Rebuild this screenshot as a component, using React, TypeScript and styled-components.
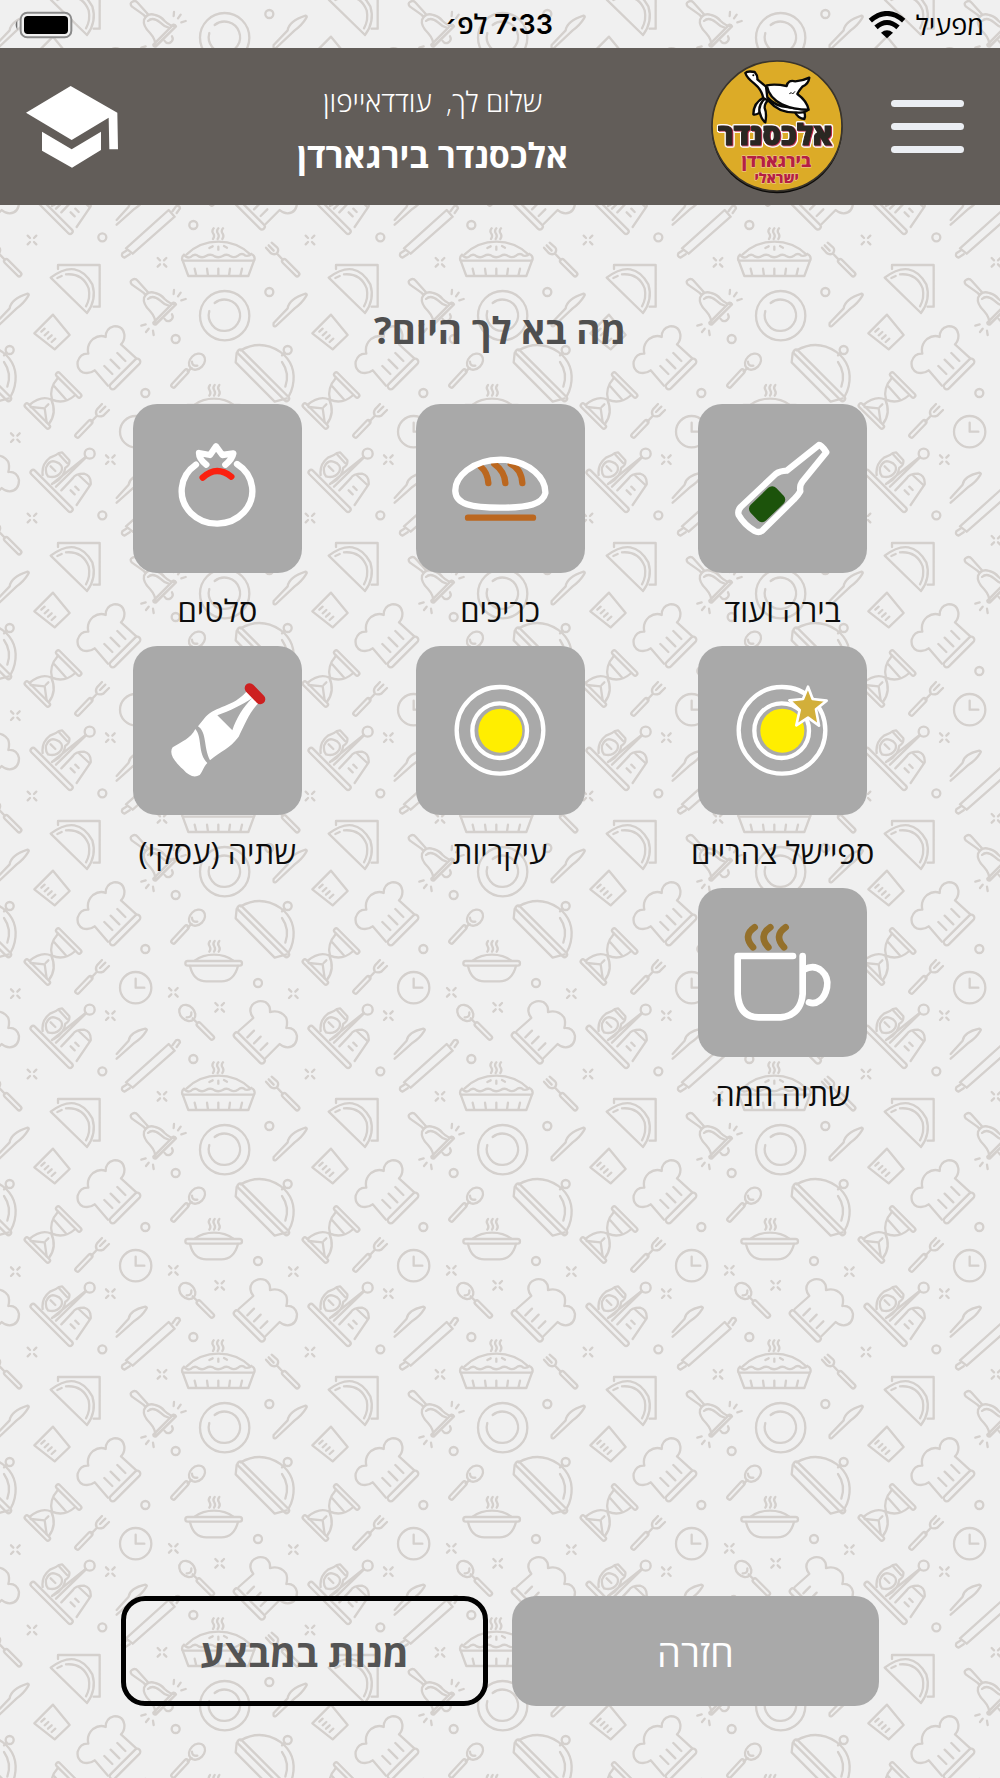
import React from "react";
import styled, { createGlobalStyle } from "styled-components";

/* ---------- kitchen wallpaper: one seamless tile ---------- */

const steam = (x: number, y: number) =>
  [0, 14, 28].map((d) => `<path d="M${x + d} ${y}q-7 8-1 16q5 8-1 16"/>`).join("");
const dot = (x: number, y: number) => `<circle cx="${x}" cy="${y}" r="12"/>`;
const spark = (x: number, y: number) =>
  `<path d="M${x - 13} ${y - 13}l7 7M${x + 13} ${y - 13}l-7 7M${x - 13} ${y + 13}l7-7M${x + 13} ${y + 13}l-7-7"/>`;
const bar = (x: number, y: number, len: number, w: number, angle: number) =>
  `<rect x="${x}" y="${y - w / 2}" width="${len}" height="${w}" rx="${w / 2}" transform="rotate(${angle} ${x} ${y})"/>`;

const wallpaperArt = [
  // pie
  steam(281, 4),
  `<path d="M200 82q40-38 95-38t96 38M192 83q-6 5-6 12q0 6 8 6h202q8 0 8-6q0-10-10-14M192 83q8 12 20 7q12-12 24-2q12 6 22-1q14-8 26 1q12 6 24-1q12-8 24 1q10 6 22-2q12-10 22 0q12 2 18-5"/>`,
  `<path d="M188 101l17 46h180l17-46M224 125l5 21M261 125l3 21M295 125v21M330 125l-3 21M366 125l-5 21M268 63l10-5M295 59v9M312 57l9 5"/>`,
  // small fork
  bar(488, 98, 68, 13, 45),
  `<path d="M488 98l-16-17M438 62l14 16q8 6 18 2q8-10 2-18l-17-15M446 55l15 16"/>`,
  // bell
  `<path d="M70 197L35 172q-7-9 2-14q9-5 16 3l31 35M70 197l6 6M72 212q10-22 34-14q16 4 28 18q16 16 34 16L106 292q2-20-16-40q-22-22-18-40M84 216q14-14 36 4q12 12 26 16M100 287l60-60q6-1 8 5l-60 60q-8 2-8-5M134 276q6 10 18 4q10-8 4-18M162 189l-1 12M182 197l-8 11M197 216l-13 4M64 296l13-4M86 305l-8 10M99 311l2 13"/>`,
  // plate
  `<circle cx="314" cy="266" r="74"/><path d="M284 228a47 47 0 1 1-16 24"/>`,
  // table knife
  `<path d="M461 288l42-44q4-28 54-44q6 2 1 8q-12 20-34 36l-56 53q-10 5-7-9"/>`,
  // taco on napkin
  `<path d="M648 126v-12h125v125h-18M626 152q80-60 125 20q14 46-16 86L626 152M646 153l13-6M672 142q50-4 68 42q6 30-8 54"/>`,
  // napkin
  `<path d="M633 263l50 61-45 43-61-48zM598 314l10-9M608 325l11-10M618 335l11-10M629 345l11-10"/>`,
  // chef hat
  `<path d="M798 476l-40-46q-16 12-36 6q-18-10-15-32q8-26 32-24q-6-26 14-44q20-14 38-6q0-26 24-32q28-2 32 24q2 18-10 30l46 42M787 417l24 24M806 398l26 26M826 378l24 24"/>`,
  bar(806, 484, 122, 18, -45),
  // hot dish
  steam(270, 474),
  bar(196, 541, 170, 14, 0),
  `<path d="M224 533q24-18 58-18t58 18M210 549q10 46 50 46h44q38 0 50-46"/>`,
  // spoon
  bar(156, 480, 70, 13, -47),
  `<path d="M203 433l12-10"/><ellipse cx="231" cy="404" rx="27" ry="21" transform="rotate(-45 231 404)"/><path d="M216 404q0 14 16 12"/>`,
  // cloche
  `<path d="M362 370q60-34 118 4q52 38 38 104q-4 18-12 30M486 405q24 34 10 74"/>`,
  bar(355, 370, 212, 15, 45),
  `<path d="M350 378l-3 28 117 118 36-10M486 385l8-8"/><circle cx="503" cy="369" r="12"/>`,
  // hourglass
  bar(644, 438, 102, 13, 45),
  bar(550, 531, 102, 13, 45),
  `<path d="M648 452q-28 32-18 66q36 16 70-14M636 477l38 43M562 534q36-30 66-16q18 40-8 74M566 540l42 4 6 42M611 540l8-8"/>`,
  // fork
  bar(702, 630, 68, 13, -46),
  `<path d="M748 584l16-17M780 531l-15 16q-6 8-1 18q8 6 20 1l17-17M790 539l-16 16"/>`,
  // clock
  `<circle cx="47" cy="614" r="47"/><path d="M47 587v27h26"/>`,
  // salad spoon
  bar(232, 720, 68, 13, 45),
  `<path d="M232 720l-14-14"/><ellipse cx="202" cy="690" rx="27" ry="21" transform="rotate(45 202 690)"/><path d="M214 688q2 16-14 15"/>`,
  // second chef hat
  `<path d="M356 744l44-39q-16-22-4-38q16-18 40-10q16 10 14 30q30-8 48 16q6 14 1 32q26-2 32 24q0 32-28 34q-14 0-24-10l-42 42M382 763l20-20M402 781l20-20M422 801l20-20"/>`,
  bar(344, 751, 124, 17, 45),
  // cruet stand
  bar(568, 731, 172, 15, 45),
  `<path d="M602 744q-4-32 22-52l18-8q8-8 18-8l22 24q2 14-12 22q-4 30-34 46M651 682l24 26M612 722q10-24 28-18q26 8 18 30q-14 22-40 14q-8-8-6-26M626 718l14 14M630 771l102-82M642 779l90-88M658 790l34-36q8-14 34-14q22 6 20 32l-42 62M710 744l32 30M700 779l10 10M686 790l12 12"/><circle cx="743" cy="680" r="15"/>`,
  // long knife on the left
  `<path d="M-10 813l36-40q4-26 50-36q8 2 2 8q-12 20-34 34l-54 48"/>`,
  // rolling pin
  `<path d="M18 898L146 783l18 20L38 914zM158 786l10-14q10-4 12 6l-10 14M22 903l-15 10q-4 10 6 13l16-10"/>`,
  dot(448, 195), dot(167, 336), dot(76, 498), dot(414, 600), dot(781, 31), dot(220, 828),
  spark(570, 39), spark(126, 106), spark(160, 628), spark(299, 673), spark(520, 632), spark(805, 698),
].join("");

const wallpaperSvg =
  `<svg xmlns="http://www.w3.org/2000/svg" viewBox="0 0 834 834"><defs><g id="a" fill="none" stroke="#d4d0cd" stroke-width="7" stroke-linecap="round" stroke-linejoin="round">${wallpaperArt}</g></defs>` +
  `<use href="#a"/><use href="#a" x="834"/><use href="#a" x="-834"/><use href="#a" y="834"/><use href="#a" y="-834"/></svg>`;

const wallpaper = `url("data:image/svg+xml,${encodeURIComponent(wallpaperSvg)}")`;

/* ---------- styles ---------- */

const font = `"Open Sans", "Noto Sans", "DejaVu Sans", sans-serif`;

const GlobalStyle = createGlobalStyle`
  *, *::before, *::after { box-sizing: border-box; }
  body { margin: 0; }
  button { font: inherit; color: inherit; border: 0; padding: 0; background: none; cursor: pointer; }
`;

const Page = styled.div`
  display: flex;
  flex-direction: column;
  min-height: 100vh;
  font-family: ${font};
  color: #0c0c0c;
  background: #f0f0f0 ${wallpaper} 120px -51px / 278px 278px;
`;

const StatusBar = styled.div`
  display: grid;
  grid-template-columns: 1fr auto 1fr;
  align-items: center;
  height: 48px;
  padding: 2px 16px 0 14px;
  font-size: 27px;
  line-height: 36px;
  color: #000;
`;

const Carrier = styled.div`
  display: flex;
  align-items: center;
  gap: 10px;
`;

const Clock = styled.time`
  font-family: Inter, ${font};
  font-weight: 600;
`;

const BatterySlot = styled.div`
  display: flex;
  justify-content: flex-end;
`;

const Header = styled.header`
  display: flex;
  align-items: center;
  height: 157px;
  padding: 0 36px 0 26px;
  background: #625d59;
  color: #fff;
`;

const MenuButton = styled.button`
  display: flex;
  flex-direction: column;
  gap: 16px;
  width: 73px;
`;

const MenuLine = styled.span`
  height: 7px;
  border-radius: 4px;
  background: #ebeef3;
`;

const LogoLink = styled.a`
  display: flex;
  margin-right: 47px;
`;

const Greeting = styled.div`
  flex: 1;
  padding-top: 12px;
  text-align: center;
`;

const Hello = styled.p`
  margin: 0;
  font-size: 28px;
  line-height: 44px;
  font-weight: 300;
  white-space: pre;
`;

const Venue = styled.h1`
  margin: 0;
  font-size: 34px;
  line-height: 64px;
  font-weight: 700;
`;

const LessonsButton = styled.button`
  display: flex;
  margin-right: 37px;
`;

const Main = styled.main`
  display: flex;
  flex-direction: column;
  flex: 1;
  padding: 92px 76px 72px;
`;

const Question = styled.h2`
  margin: 0 0 41px;
  font-size: 37px;
  line-height: 66px;
  font-weight: 700;
  text-align: center;
  color: #4f4f4f;
`;

const Categories = styled.div`
  display: grid;
  grid-template-columns: repeat(3, 1fr);
  row-gap: 14px;
  justify-items: center;
`;

const Category = styled.button`
  display: flex;
  flex-direction: column;
  align-items: center;
  gap: 16px;
`;

const Tile = styled.span`
  display: flex;
  width: 169px;
  height: 169px;
  border-radius: 24px;
  background: #a9a9a9;
`;

const Label = styled.span`
  font-size: 31px;
  line-height: 43px;
  white-space: nowrap;
`;

const Actions = styled.div`
  display: grid;
  grid-template-columns: 1fr 1fr;
  gap: 24px;
  margin: auto 45px 0;
`;

const ActionButton = styled.button<{ $outlined?: boolean }>`
  height: 110px;
  padding-top: 2px;
  border-radius: 24px;
  font-size: 38px;
  font-weight: ${(p) => (p.$outlined ? 700 : 400)};
  color: ${(p) => (p.$outlined ? "#545454" : "#fff")};
  background: ${(p) => (p.$outlined ? "transparent" : "#a9a9a9")};
  border: ${(p) => (p.$outlined ? "5px solid #000" : "0")};
`;

/* ---------- drawings ---------- */

const Wifi = () => (
  <svg width="38" height="28" viewBox="0 0 114 84" aria-hidden="true">
    <g fill="none" stroke="#000" strokeWidth="15">
      <path d="M7 29Q57-14 107 29" />
      <path d="M24 49Q57 20 90 49" />
    </g>
    <path d="M39 65Q57 51 75 65L57 82Z" />
  </svg>
);

const Battery = () => (
  <svg width="59" height="28" viewBox="0 0 177 84" aria-hidden="true">
    <rect x="20" y="5" width="152" height="74" rx="20" fill="#f0f0f0" stroke="#8a8a8a" strokeWidth="6" />
    <rect x="30" y="15" width="132" height="54" rx="11" />
    <path d="M10 28Q0 42 10 57Z" fill="#6e6e6e" />
  </svg>
);

const Cap = () => (
  <svg width="92" height="82" viewBox="0 0 276 246" fill="#fff" aria-hidden="true">
    <path d="M0 80L134 0 274 80 276 190H250L248 95 137 162Z" />
    <path d="M48 137L137 190 225 137V192L138 245 48 194Z" />
  </svg>
);

const BrandName = styled.text`
  filter: drop-shadow(3px 2px 0 #b92043) drop-shadow(3px 0 0 #fff) drop-shadow(-3px 0 0 #fff)
    drop-shadow(0 3px 0 #fff) drop-shadow(0 -3px 0 #fff);
`;

const Logo = () => (
  <svg width="134" height="134" viewBox="60 30 402 402" aria-hidden="true">
    <ellipse cx="261" cy="234" rx="196" ry="196" fill="#0c0b0a" />
    <circle cx="261" cy="228" r="195" fill="#dcab27" stroke="#3a352c" strokeWidth="5" />
    <g fill="#fff" stroke="#090909" strokeWidth="7" strokeLinejoin="round">
      <path d="M222 142Q190 158 190 193Q194 196 208 189Q210 170 228 153Z" />
      <path d="M225 145Q202 168 210 190Q214 208 226 217Q231 190 224 174Q223 160 237 148Z" />
      <path d="M314 185Q324 205 343 207Q349 193 338 181Z" />
      <path d="M166 69Q172 62 194 66Q204 78 202 88L228 110L232 142Q258 170 292 171L354 180Q342 191 318 187Q268 190 237 154L220 144Q215 119 193 101Q170 83 166 69Z" />
      <path d="M230 106Q255 101 290 108Q294 88 316 94Q338 93 358 83Q356 102 337 110Q325 124 322 132Q350 152 356 179Q310 179 276 163Q237 144 230 106Z" />
      <path d="M298 131l6-3 4 4 7-8" fill="none" strokeWidth="3" />
    </g>
    <circle cx="190" cy="76" r="3" />
    <g direction="rtl" textAnchor="middle" fontFamily={font} fontWeight="800">
      <BrandName x="255" y="286" fontSize="87" fill="#2a2722" stroke="#2a2722" strokeWidth="3">אלכסנדר</BrandName>
      <text x="259" y="350" fontSize="52" fill="#b51f43" stroke="#f1cfa0" strokeWidth="3" paintOrder="stroke">בירגארדן</text>
      <text x="260" y="398" fontSize="42" fill="#b51f43" stroke="#f1cfa0" strokeWidth="3" paintOrder="stroke">ישראלי</text>
    </g>
  </svg>
);

const Plate = () => (
  <>
    <g fill="none" stroke="#fff" strokeWidth="13">
      <circle cx="252" cy="253" r="130" />
      <circle cx="251" cy="254" r="82" />
    </g>
    <circle cx="253" cy="254" r="66" fill="#ffee00" />
  </>
);

const art: Record<string, React.ReactNode> = {
  beer: (
    <>
      <path
        d="M363 123Q370 122 385 145L314 232Q304 244 307 262Q300 275 288 286L194 379Q183 388 170 381Q138 362 122 333Q118 320 128 309L233 210Q245 201 266 200Z"
        fill="none" stroke="#fff" strokeWidth="19" strokeLinejoin="round"
      />
      <rect x="154" y="268" width="107" height="66" rx="17" transform="rotate(-44 207 301)" fill="#1c530b" />
    </>
  ),
  bread: (
    <>
      <g fill="none" stroke="#bb671f" strokeWidth="19" strokeLinecap="round">
        <path d="M193 187Q215 205 217 237M235 180Q266 202 268 237M284 180Q316 195 319 237" />
        <path d="M156 341H351" />
      </g>
      <path d="M254 167C346 170 390 226 388 268C380 300 340 311 252 311C164 311 120 300 118 262C116 220 166 168 254 167Z" fill="none" stroke="#fff" strokeWidth="19" />
    </>
  ),
  tomato: (
    <g fill="none" strokeWidth="19" strokeLinecap="round" strokeLinejoin="round">
      <g stroke="#fff">
        <path d="M189 182A106 98 0 1 0 312 180" />
        <path d="M220 182Q198 165 198 147L231 153 249 127 268 153 301 148Q298 165 277 182" />
      </g>
      <path d="M209 221Q250 183 295 218" stroke="#fb2110" />
    </g>
  ),
  special: (
    <>
      <Plate />
      <path d="M330 122L344 159 386 164 354 190 363 239 330 215 295 238 305 192 274 163 315 159Z" fill="#d2af3a" stroke="#fff" strokeWidth="8" strokeLinejoin="round" />
    </>
  ),
  plate: <Plate />,
  cola: (
    <>
      <path fill="#fff" fillRule="evenodd" d="M340 137C300 183 248 180 218 212L195 241C222 258 211 304 231 343C265 314 290 308 317 272C336 235 350 195 380 168ZM253 208C290 194 328 177 358 156C330 184 310 216 298 253Z" />
      <path fill="#fff" d="M187 249C173 277 148 286 119 304C108 320 119 342 150 370C168 391 185 396 200 387C210 375 211 363 223 351C193 321 209 275 187 249Z" />
      <rect x="328" y="128" width="76" height="30" rx="15" transform="rotate(46 366 143)" fill="#cd2020" />
    </>
  ),
  coffee: (
    <g fill="none" strokeWidth="20" strokeLinecap="round" strokeLinejoin="round">
      <path stroke="#fff" d="M285 204H119V318Q124 388 182 388H248Q308 382 314 318V204" />
      <path stroke="#fff" d="M318 245C360 222 394 260 387 298C380 334 356 351 333 343" />
      <path stroke="#94702b" d="M170 118Q133 143 165 178M217 118Q180 143 211 178M263 118Q226 143 258 178" />
    </g>
  ),
};

const categories = [
  { art: "beer", label: "בירה ועוד" },
  { art: "bread", label: "כריכים" },
  { art: "tomato", label: "סלטים" },
  { art: "special", label: "ספיישל צהריים" },
  { art: "plate", label: "עיקריות" },
  { art: "cola", label: "שתיה (עסקי)" },
  { art: "coffee", label: "שתיה חמה" },
];

export default function App() {
  return (
    <Page dir="rtl" lang="he">
      <GlobalStyle />
      <StatusBar>
        <Carrier>
          <span>מפעיל</span>
          <Wifi />
        </Carrier>
        <Clock>7:33 לפ׳</Clock>
        <BatterySlot>
          <Battery />
        </BatterySlot>
      </StatusBar>
      <Header>
        <MenuButton type="button" aria-label="תפריט">
          <MenuLine />
          <MenuLine />
          <MenuLine />
        </MenuButton>
        <LogoLink href="#" aria-label="אלכסנדר בירגארדן">
          <Logo />
        </LogoLink>
        <Greeting>
          <Hello>שלום לך,  עודדאייפון</Hello>
          <Venue>אלכסנדר בירגארדן</Venue>
        </Greeting>
        <LessonsButton type="button" aria-label="הדרכה">
          <Cap />
        </LessonsButton>
      </Header>
      <Main>
        <Question>מה בא לך היום?</Question>
        <Categories>
          {categories.map((c) => (
            <Category key={c.art} type="button">
              <Tile>
                <svg width="169" height="169" viewBox="0 0 507 507" aria-hidden="true">
                  {art[c.art]}
                </svg>
              </Tile>
              <Label>{c.label}</Label>
            </Category>
          ))}
        </Categories>
        <Actions>
          <ActionButton type="button">חזרה</ActionButton>
          <ActionButton type="button" $outlined>מנות במבצע</ActionButton>
        </Actions>
      </Main>
    </Page>
  );
}
